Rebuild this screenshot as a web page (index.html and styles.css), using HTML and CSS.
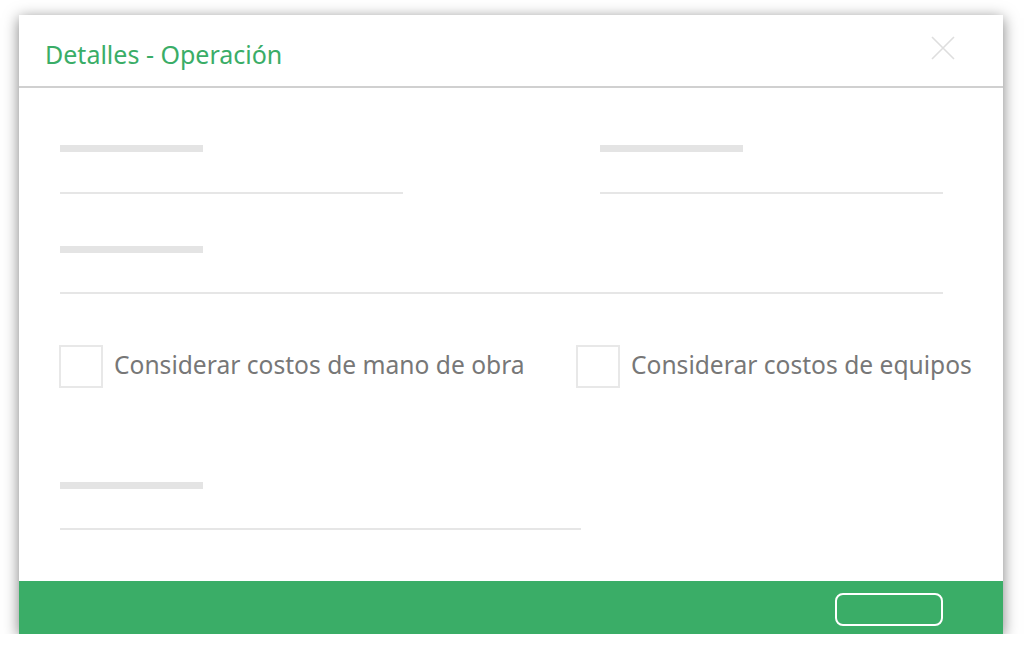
FILE: index.html
```html
<!DOCTYPE html>
<html>
<head>
    <title>Detalles - Operación</title>
    <link rel="stylesheet" href="styles.css">
</head>
<body>
    <div class="modal">
        <div class="modal-header">
            <h1 class="modal-title">Detalles - Operación</h1>
            <button class="close" aria-label="Cerrar">
                <svg width="24" height="24" viewBox="0 0 24 24">
                    <path d="M1 1 L23 23 M23 1 L1 23" stroke="#dedede" stroke-width="1.6" fill="none"/>
                </svg>
            </button>
        </div>

        <div class="modal-body">
            <div class="row">
                <div class="field half">
                    <div class="label-bar"></div>
                    <div class="input-line"></div>
                </div>
                <div class="field half">
                    <div class="label-bar"></div>
                    <div class="input-line"></div>
                </div>
            </div>

            <div class="row">
                <div class="field full">
                    <div class="label-bar"></div>
                    <div class="input-line short"></div>
                </div>
            </div>

            <div class="checks">
                <label class="check first">
                    <span class="box"></span>
                    <span class="check-text">Considerar costos de mano de obra</span>
                </label>
                <label class="check">
                    <span class="box"></span>
                    <span class="check-text">Considerar costos de equipos</span>
                </label>
            </div>

            <div class="row">
                <div class="field wide">
                    <div class="label-bar"></div>
                    <div class="input-line short"></div>
                </div>
            </div>
        </div>

        <div class="modal-footer">
            <button class="btn-outline"></button>
        </div>
    </div>
</body>
</html>
```

FILE: styles.css
```css
body {
    font-family: 'Noto Sans', sans-serif;
    margin: 0;
    padding: 15px 0 0 19px;
    background-color: #fff;
}

.modal {
    width: 984px;
    height: 619px;
    background-color: #fff;
    box-shadow: 0 3px 14px rgba(0, 0, 0, 0.5);
    display: flex;
    flex-direction: column;
}

.modal-header {
    flex-shrink: 0;
    height: 73px;
    box-sizing: border-box;
    border-bottom: 2px solid #d0d0d0;
    display: flex;
    align-items: center;
    justify-content: space-between;
    padding: 6px 48px 0 26px;
}

.modal-title {
    margin: 0;
    font-size: 25px;
    font-weight: normal;
    color: #3aad67;
}

.close {
    background: none;
    border: none;
    padding: 0;
    width: 24px;
    height: 24px;
    margin-top: -12px;
    cursor: pointer;
}

.modal-body {
    flex: 1;
    padding: 57px 60px 0 41px;
}

.row {
    display: flex;
    justify-content: space-between;
}

.field.half {
    width: 343px;
}

.field.full {
    width: 883px;
    margin-top: 52px;
}

.field.wide {
    width: 521px;
    margin-top: 94px;
}

.label-bar {
    width: 143px;
    height: 7px;
    background-color: #e4e4e4;
}

.input-line {
    height: 2px;
    margin-top: 40px;
    background-color: #e6e6e6;
}

.input-line.short {
    margin-top: 39px;
}

.checks {
    display: flex;
    margin-top: 51px;
    margin-left: -1px;
}

.check {
    display: flex;
    align-items: center;
    white-space: nowrap;
    flex-shrink: 0;
}

.check.first {
    width: 517px;
}

.box {
    width: 44px;
    height: 43px;
    border: 2px solid #e8e8e8;
    box-sizing: border-box;
    margin-right: 11px;
}

.check-text {
    font-size: 24.6px;
    color: #777;
    margin-top: -5px;
}

.modal-footer {
    flex-shrink: 0;
    height: 53px;
    box-sizing: border-box;
    background-color: #3aad67;
    display: flex;
    align-items: center;
    justify-content: flex-end;
    padding: 4px 60px 0 0;
}

.btn-outline {
    width: 108px;
    height: 33px;
    border: 2px solid #fff;
    border-radius: 8px;
    background: transparent;
    cursor: pointer;
}
```
